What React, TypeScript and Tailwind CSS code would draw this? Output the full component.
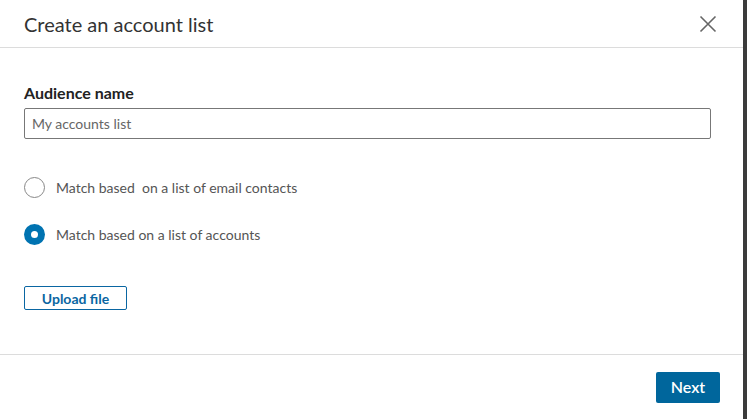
import React from "react";

export default function App() {
  const font = { fontFamily: "Lato, 'Noto Sans', sans-serif" };
  return (
    <div className="flex h-[419px] w-[747px] bg-[#3b3b3b]" style={font}>
      <div className="flex h-full w-[743px] flex-col bg-white">
        <div className="flex h-[48px] items-center justify-between border-b border-[#dcdcdc] pl-[24px] pr-[26px]">
          <h1 className="text-[20px] leading-none text-[#333333]">Create an account list</h1>
          <svg width="18" height="18" viewBox="0 0 18 18" className="text-[#666666]">
            <path d="M1.5 1.5 L16.5 16.5 M16.5 1.5 L1.5 16.5" stroke="currentColor" strokeWidth="1.6" fill="none" />
          </svg>
        </div>
        <div className="flex flex-1 flex-col px-[24px] pt-[35px]">
          <label className="text-[16px] font-bold leading-5 text-[#222222]">Audience name</label>
          <div className="mt-[5px] flex h-[31px] w-[687px] items-center rounded-[2px] border border-[#777777] px-[7px] text-[14px] text-[#666666]">
            My accounts list
          </div>
          <div className="mt-[38px] flex items-center gap-[11px]">
            <span className="h-[21px] w-[21px] rounded-full border border-[#888888] bg-white" />
            <span className="text-[14px] text-[#555555]">Match based&nbsp; on a list of email contacts</span>
          </div>
          <div className="mt-[26px] flex items-center gap-[11px]">
            <span className="flex h-[21px] w-[21px] items-center justify-center rounded-full bg-[#0073b1]">
              <span className="h-[7px] w-[7px] rounded-full bg-white" />
            </span>
            <span className="text-[14px] text-[#555555]">Match based on a list of accounts</span>
          </div>
          <div className="mt-[41px]">
            <button className="flex h-[24px] w-[103px] items-center justify-center rounded-[2px] border border-[#0a66a2] text-[14px] font-bold text-[#0a66a2]">
              Upload file
            </button>
          </div>
        </div>
        <div className="flex h-[65px] items-center justify-end border-t border-[#dcdcdc] pr-[23px]">
          <button className="flex h-[31px] w-[64px] items-center justify-center rounded-[2px] bg-[#00669c] text-[16px] font-semibold text-white">
            Next
          </button>
        </div>
      </div>
    </div>
  );
}
